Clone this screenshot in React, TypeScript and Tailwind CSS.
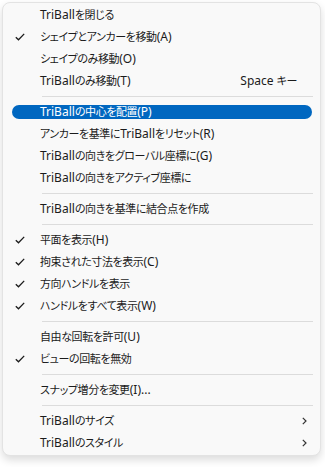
import React from "react";

type Item =
  | { kind: "sep" }
  | { kind: "item"; label: string; checked?: boolean; active?: boolean; shortcut?: string; sub?: boolean };

const items: Item[] = [
  { kind: "item", label: "TriBallを閉じる" },
  { kind: "item", label: "シェイプとアンカーを移動(A)", checked: true },
  { kind: "item", label: "シェイプのみ移動(O)" },
  { kind: "item", label: "TriBallのみ移動(T)", shortcut: "Space キー" },
  { kind: "sep" },
  { kind: "item", label: "TriBallの中心を配置(P)", active: true },
  { kind: "item", label: "アンカーを基準にTriBallをリセット(R)" },
  { kind: "item", label: "TriBallの向きをグローバル座標に(G)" },
  { kind: "item", label: "TriBallの向きをアクティブ座標に" },
  { kind: "sep" },
  { kind: "item", label: "TriBallの向きを基準に結合点を作成" },
  { kind: "sep" },
  { kind: "item", label: "平面を表示(H)", checked: true },
  { kind: "item", label: "拘束された寸法を表示(C)", checked: true },
  { kind: "item", label: "方向ハンドルを表示", checked: true },
  { kind: "item", label: "ハンドルをすべて表示(W)", checked: true },
  { kind: "sep" },
  { kind: "item", label: "自由な回転を許可(U)" },
  { kind: "item", label: "ビューの回転を無効", checked: true },
  { kind: "sep" },
  { kind: "item", label: "スナップ増分を変更(I)..." },
  { kind: "sep" },
  { kind: "item", label: "TriBallのサイズ", sub: true },
  { kind: "item", label: "TriBallのスタイル", sub: true },
];

// Japanese runs are set a little tighter than the Latin parts, like Yu Gothic UI
function Label({ text }: { text: string }) {
  const parts = text.split(/([\u3040-\u30ff\u4e00-\u9fff]+)/);
  return (
    <>
      {parts.map((p, i) =>
        /[\u3040-\u30ff\u4e00-\u9fff]/.test(p) ? (
          <span key={i} className="text-[11px] tracking-[-0.4px]">
            {p}
          </span>
        ) : (
          <span key={i}>{p}</span>
        )
      )}
    </>
  );
}

function Check({ light }: { light?: boolean }) {
  return (
    <svg width="10" height="8" viewBox="0 0 10 8" fill="none">
      <path d="M0.8 4.2 L3.5 6.8 L9.2 0.9" stroke={light ? "#ffffff" : "#1b1b1b"} strokeWidth="1.3" />
    </svg>
  );
}

function Chevron() {
  return (
    <svg width="5" height="8" viewBox="0 0 5 8" fill="none">
      <path d="M0.8 0.8 L4 4 L0.8 7.2" stroke="#333333" strokeWidth="1.2" />
    </svg>
  );
}

export default function App() {
  return (
    <div
      className="w-[325px] h-[467px] bg-white pt-[2px] pl-[2px] [font-feature-settings:'palt']"
      style={{ fontFamily: '"Segoe UI", "Noto Sans", "Noto Sans CJK JP", sans-serif' }}
    >
      <div className="w-[319px] rounded-[8px] border border-[#e3e3e3] bg-[#f9f9f9] py-[1px] shadow-[0_4px_8px_rgba(0,0,0,0.14)]">
        {items.map((it, i) =>
          it.kind === "sep" ? (
            <div key={i} className="h-[9px] flex items-center pl-[39px] pr-[7px]">
              <div className="h-px w-full bg-[#dcdcdc]" />
            </div>
          ) : (
            <div key={i} className="h-[22px] flex items-center pl-[9px] pr-[8px]">
              <div
                className={
                  "h-[14px] w-full flex items-center rounded-full text-[12px] leading-[14px] " +
                  (it.active ? "bg-[#0067c0] text-white" : "text-[#1b1b1b]")
                }
              >
                <div className="w-[28px] pl-[3px] flex items-center">{it.checked && <Check light={it.active} />}</div>
                <div className="flex-1 whitespace-nowrap">
                  <Label text={it.label} />
                </div>
                {it.shortcut && (
                  <div className="pr-[15px] whitespace-nowrap">
                    <Label text={it.shortcut} />
                  </div>
                )}
                {it.sub && (
                  <div className="pr-[5px] flex items-center">
                    <Chevron />
                  </div>
                )}
              </div>
            </div>
          )
        )}
      </div>
    </div>
  );
}
